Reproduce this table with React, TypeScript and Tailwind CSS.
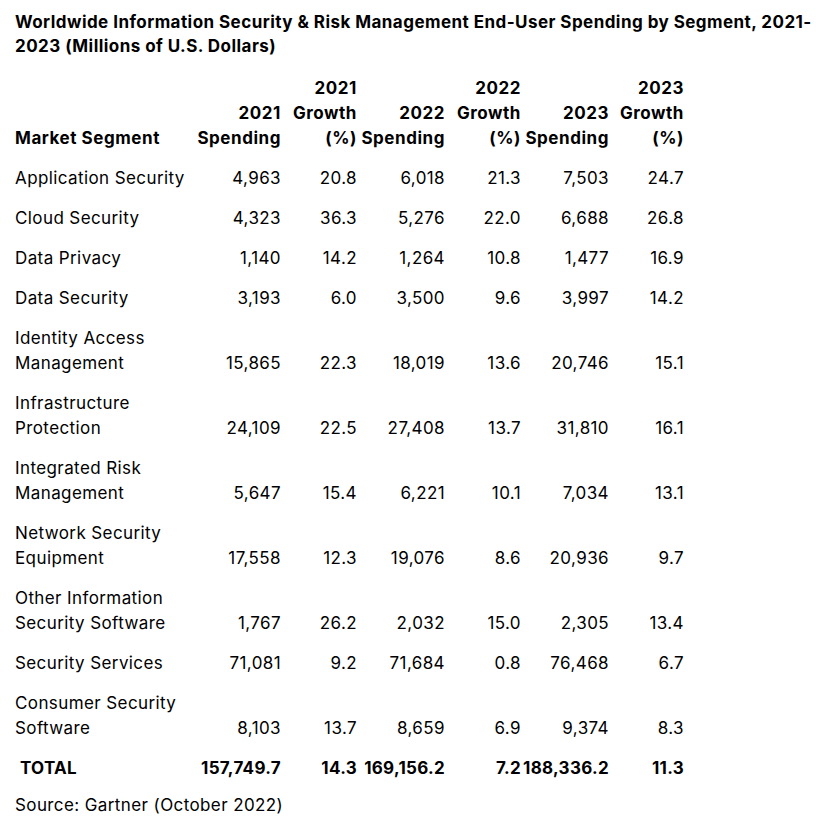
import React from "react";

type Row = { seg: string[]; v: string[] };

const rows: Row[] = [
  { seg: ["Application Security"], v: ["4,963", "20.8", "6,018", "21.3", "7,503", "24.7"] },
  { seg: ["Cloud Security"], v: ["4,323", "36.3", "5,276", "22.0", "6,688", "26.8"] },
  { seg: ["Data Privacy"], v: ["1,140", "14.2", "1,264", "10.8", "1,477", "16.9"] },
  { seg: ["Data Security"], v: ["3,193", "6.0", "3,500", "9.6", "3,997", "14.2"] },
  { seg: ["Identity Access", "Management"], v: ["15,865", "22.3", "18,019", "13.6", "20,746", "15.1"] },
  { seg: ["Infrastructure", "Protection"], v: ["24,109", "22.5", "27,408", "13.7", "31,810", "16.1"] },
  { seg: ["Integrated Risk", "Management"], v: ["5,647", "15.4", "6,221", "10.1", "7,034", "13.1"] },
  { seg: ["Network Security", "Equipment"], v: ["17,558", "12.3", "19,076", "8.6", "20,936", "9.7"] },
  { seg: ["Other Information", "Security Software"], v: ["1,767", "26.2", "2,032", "15.0", "2,305", "13.4"] },
  { seg: ["Security Services"], v: ["71,081", "9.2", "71,684", "0.8", "76,468", "6.7"] },
  { seg: ["Consumer Security", "Software"], v: ["8,103", "13.7", "8,659", "6.9", "9,374", "8.3"] },
];

const cols = "grid grid-cols-[178px_88px_76px_88px_76px_88px_75px]";

export default function App() {
  return (
    <div
      className="bg-white text-black min-h-[823px] pl-[15px] pt-[10px]"
      style={{ fontFamily: "Inter, 'Liberation Sans', sans-serif" }}
    >
      <div className="text-[17px] font-bold leading-[24px] tracking-[0.45px]">
        <div className="whitespace-nowrap">
          Worldwide Information Security &amp; Risk Management End-User Spending by Segment, 2021-
        </div>
        <div className="whitespace-nowrap">2023 (Millions of U.S. Dollars)</div>
      </div>

      <div className="mt-[10px] text-[17px] leading-[25px] tracking-[0.4px]">
        <div className={`${cols} font-bold items-end py-[7.5px] tracking-[0.55px]`}>
          <div className="whitespace-nowrap">Market Segment</div>
          <div className="text-right whitespace-nowrap">
            2021
            <br />
            Spending
          </div>
          <div className="text-right whitespace-nowrap">
            2021
            <br />
            Growth
            <br />
            (%)
          </div>
          <div className="text-right whitespace-nowrap">
            2022
            <br />
            Spending
          </div>
          <div className="text-right whitespace-nowrap">
            2022
            <br />
            Growth
            <br />
            (%)
          </div>
          <div className="text-right whitespace-nowrap">
            2023
            <br />
            Spending
          </div>
          <div className="text-right whitespace-nowrap">
            2023
            <br />
            Growth
            <br />
            (%)
          </div>
        </div>

        {rows.map((r, i) => (
          <div key={i} className={`${cols} items-end py-[7.5px]`}>
            <div>
              {r.seg.map((s, j) => (
                <div key={j} className="whitespace-nowrap">
                  {s}
                </div>
              ))}
            </div>
            {r.v.map((v, j) => (
              <div key={j} className="text-right whitespace-nowrap">
                {v}
              </div>
            ))}
          </div>
        ))}

        <div className={`${cols} items-end py-[7.5px] font-bold tracking-[0.3px]`}>
          <div className="pl-[5px]">TOTAL</div>
          <div className="text-right whitespace-nowrap">157,749.7</div>
          <div className="text-right whitespace-nowrap">14.3</div>
          <div className="text-right whitespace-nowrap">169,156.2</div>
          <div className="text-right whitespace-nowrap">7.2</div>
          <div className="text-right whitespace-nowrap">188,336.2</div>
          <div className="text-right whitespace-nowrap">11.3</div>
        </div>

        <div className="mt-[5px]">Source: Gartner (October 2022)</div>
      </div>
    </div>
  );
}
